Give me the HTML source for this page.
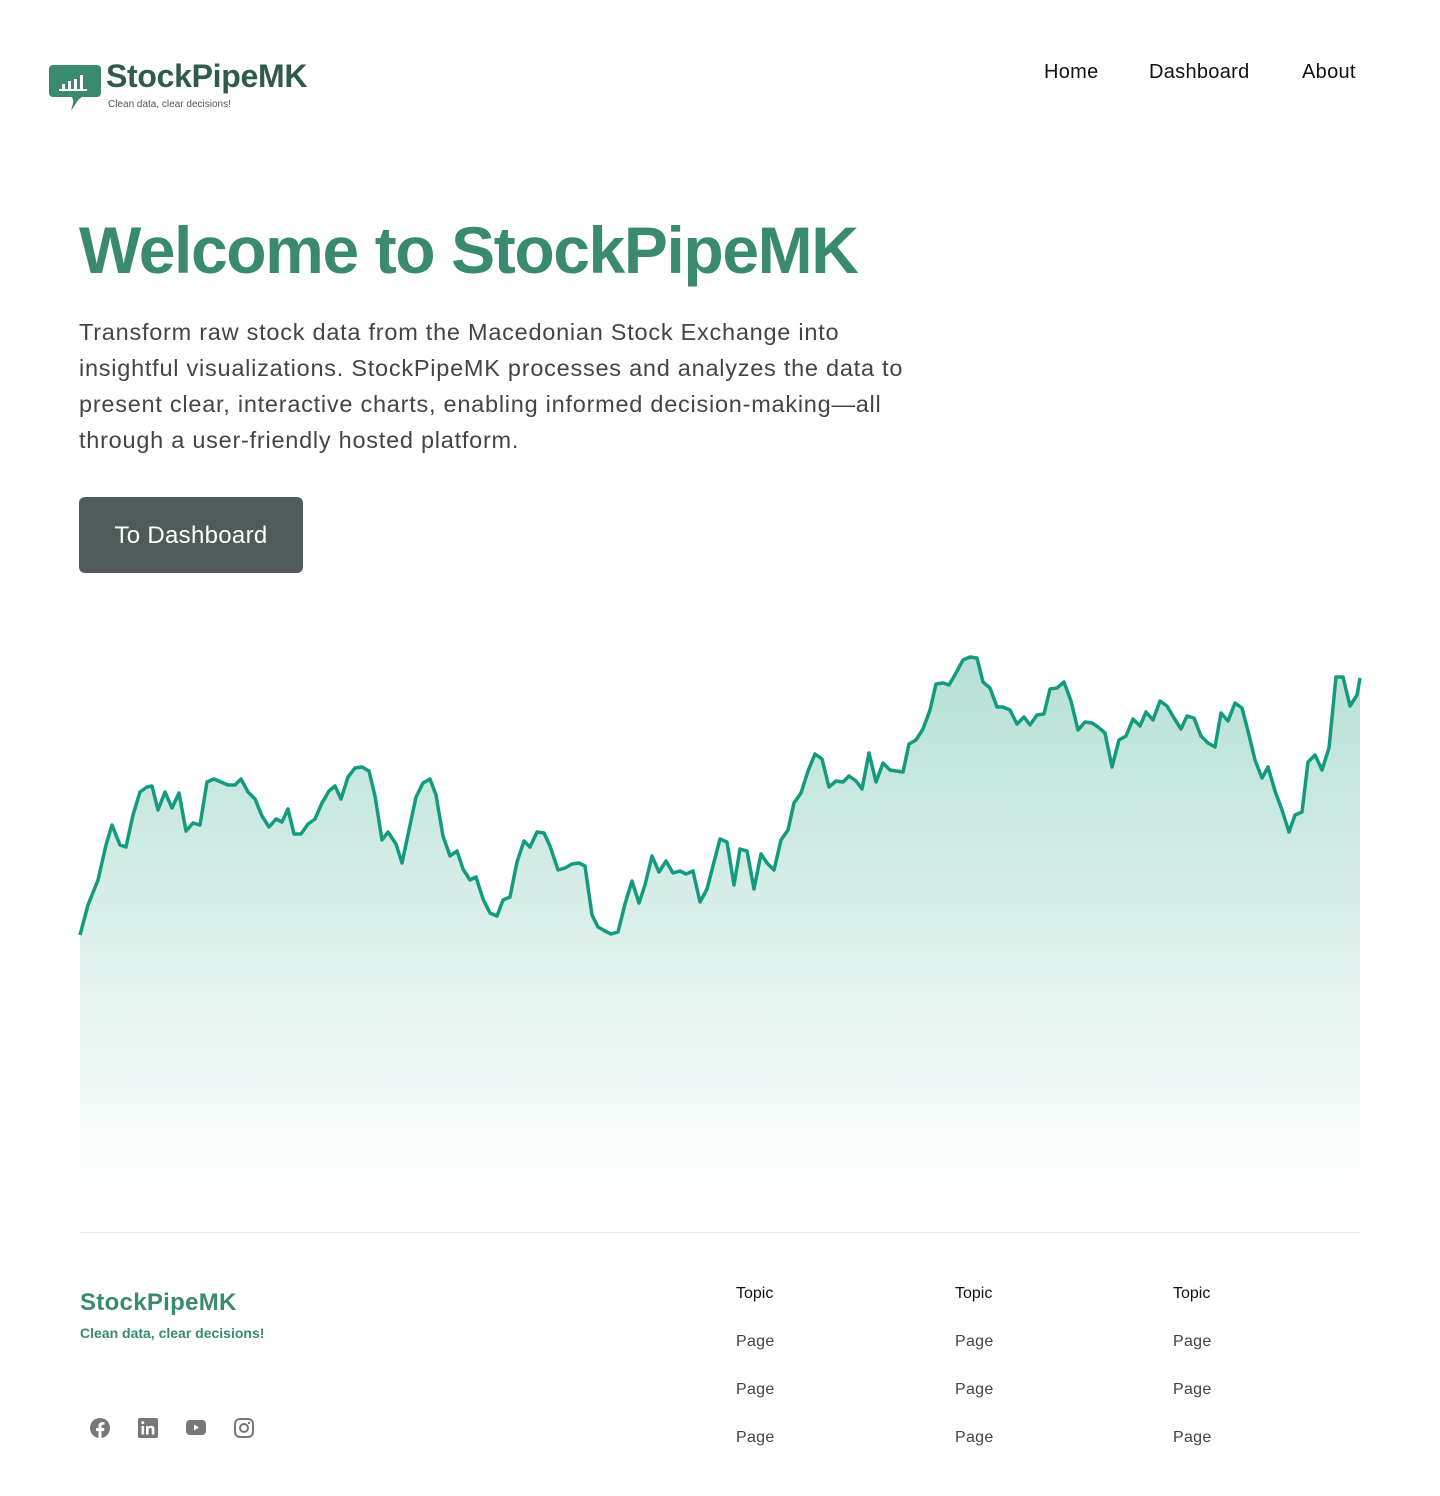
<!DOCTYPE html>
<html><head><meta charset="utf-8"><style>
*{margin:0;padding:0;box-sizing:border-box}
body{width:1440px;height:1496px;background:#fff;font-family:"Liberation Sans",sans-serif;position:relative;overflow:hidden}
.a{position:absolute}
nav a{position:absolute;top:61px;font-size:20px;color:#111;text-decoration:none;letter-spacing:0.3px}
.ft{font-size:16px;color:#111}
.fp{font-size:16px;color:#444;letter-spacing:0.3px}
</style></head><body>
<svg class="a" style="left:48px;top:62px" width="56" height="50" viewBox="0 0 56 50">
<path d="M5 3h44a4 4 0 0 1 4 4v24a4 4 0 0 1-4 4H34l-8 6-2-6H5a4 4 0 0 1-4-4V7a4 4 0 0 1 4-4z" fill="#3a8a70"/>
<path d="M26 37l-3 12 9-14z" fill="#3a8a70"/>
<g fill="#fff"><rect x="14" y="22" width="3" height="5"/><rect x="20" y="19" width="3" height="8"/><rect x="26" y="17" width="3" height="10"/><rect x="32" y="13" width="3" height="14"/><rect x="11" y="27" width="28" height="2"/></g>
</svg>
<div class="a" style="left:106px;top:58px;font-size:32px;font-weight:bold;color:#2f5a4c;letter-spacing:-0.3px">StockPipeMK</div>
<div class="a" style="left:108px;top:99px;font-size:10px;color:#555">Clean data, clear decisions!</div>
<nav><a style="left:1044px">Home</a><a style="left:1149px">Dashboard</a><a style="left:1302px">About</a></nav>
<div class="a" style="left:79px;top:212px;font-size:66px;font-weight:bold;color:#3a8a70;letter-spacing:-1.4px">Welcome to StockPipeMK</div>
<div class="a" style="left:79px;top:314px;width:850px;font-size:23.5px;line-height:36px;color:#444;letter-spacing:0.75px">Transform raw stock data from the Macedonian Stock Exchange into insightful visualizations. StockPipeMK processes and analyzes the data to present clear, interactive charts, enabling informed decision-making—all through a user-friendly hosted platform.</div>
<div class="a" style="left:79px;top:497px;width:224px;height:76px;background:#4f5b58;border-radius:6px;color:#fff;font-size:24px;line-height:78px;text-align:center;letter-spacing:0.3px">To Dashboard</div>
<svg class="a" style="left:0;top:0" width="1440" height="1496">
<defs><linearGradient id="g" x1="0" y1="650" x2="0" y2="1195" gradientUnits="userSpaceOnUse"><stop offset="0" stop-color="#b5e0d4"/><stop offset="1" stop-color="#fff"/></linearGradient></defs>
<path id="p" d="M80,935 L88,905 98,880 106,845 112,825 120,845 126,847 133,815 140,792 147,787 152,786 158,810 165,792 172,808 179,793 186,831 193,823 200,825 207,782 214,779 221,782 228,785 235,785 241,779 248,792 255,799 262,816 269,827 276,819 282,822 288,809 294,834 301,834 308,824 315,819 322,803 329,791 335,786 341,799 348,777 355,768 362,767 369,771 375,796 382,840 388,832 396,844 402,863 409,830 416,797 423,783 430,779 436,795 443,836 450,856 457,851 463,869 470,880 476,877 483,899 490,913 497,916 503,900 510,897 517,862 524,841 530,847 537,832 544,833 550,846 558,870 565,868 572,864 579,863 585,866 592,915 598,927 605,931 611,934 618,932 625,904 632,881 639,903 645,885 652,856 659,872 666,861 673,873 680,871 686,874 693,871 700,902 707,889 714,862 720,839 727,842 734,885 740,849 747,851 754,889 761,854 767,863 774,870 781,840 788,830 794,803 801,793 808,771 815,754 822,759 829,787 836,781 843,782 849,776 856,781 862,789 869,753 876,782 883,763 890,770 896,771 903,772 909,744 916,740 923,729 930,710 936,684 943,683 949,685 956,673 963,660 970,657 977,658 983,682 990,688 997,707 1003,707 1010,710 1017,724 1024,717 1030,725 1037,715 1044,714 1050,689 1057,688 1064,682 1071,701 1078,730 1085,722 1092,723 1098,727 1105,733 1112,767 1119,740 1126,736 1133,719 1140,726 1146,712 1153,720 1160,701 1167,706 1174,718 1181,729 1187,716 1194,718 1201,736 1208,743 1215,747 1221,713 1228,721 1235,703 1242,708 1249,735 1255,760 1262,778 1268,767 1275,791 1282,810 1289,832 1295,815 1302,812 1308,762 1315,755 1322,770 1329,748 1336,677 1343,677 1350,706 1357,695 1360,678" fill="none"/>
<path d="M80,935 L88,905 98,880 106,845 112,825 120,845 126,847 133,815 140,792 147,787 152,786 158,810 165,792 172,808 179,793 186,831 193,823 200,825 207,782 214,779 221,782 228,785 235,785 241,779 248,792 255,799 262,816 269,827 276,819 282,822 288,809 294,834 301,834 308,824 315,819 322,803 329,791 335,786 341,799 348,777 355,768 362,767 369,771 375,796 382,840 388,832 396,844 402,863 409,830 416,797 423,783 430,779 436,795 443,836 450,856 457,851 463,869 470,880 476,877 483,899 490,913 497,916 503,900 510,897 517,862 524,841 530,847 537,832 544,833 550,846 558,870 565,868 572,864 579,863 585,866 592,915 598,927 605,931 611,934 618,932 625,904 632,881 639,903 645,885 652,856 659,872 666,861 673,873 680,871 686,874 693,871 700,902 707,889 714,862 720,839 727,842 734,885 740,849 747,851 754,889 761,854 767,863 774,870 781,840 788,830 794,803 801,793 808,771 815,754 822,759 829,787 836,781 843,782 849,776 856,781 862,789 869,753 876,782 883,763 890,770 896,771 903,772 909,744 916,740 923,729 930,710 936,684 943,683 949,685 956,673 963,660 970,657 977,658 983,682 990,688 997,707 1003,707 1010,710 1017,724 1024,717 1030,725 1037,715 1044,714 1050,689 1057,688 1064,682 1071,701 1078,730 1085,722 1092,723 1098,727 1105,733 1112,767 1119,740 1126,736 1133,719 1140,726 1146,712 1153,720 1160,701 1167,706 1174,718 1181,729 1187,716 1194,718 1201,736 1208,743 1215,747 1221,713 1228,721 1235,703 1242,708 1249,735 1255,760 1262,778 1268,767 1275,791 1282,810 1289,832 1295,815 1302,812 1308,762 1315,755 1322,770 1329,748 1336,677 1343,677 1350,706 1357,695 1360,678 L1360,1195 L80,1195 Z" fill="url(#g)"/>
<use href="#p" stroke="#149a7e" stroke-width="3.5" stroke-linejoin="round"/>
<line x1="80" y1="1232.5" x2="1360" y2="1232.5" stroke="#e6e6e6"/>
<g fill="#777">
<circle cx="100" cy="1428" r="10"/><path d="M101.5 1438v-7h2.5l.4-3h-2.9v-1.8c0-.8.3-1.4 1.4-1.4h1.6v-2.6c-.3 0-1.2-.1-2.3-.1-2.3 0-3.7 1.4-3.700 3.9v2h-2.5v3h2.5v7z" fill="#fff"/>
<rect x="138" y="1418" width="20" height="20" rx="2"/><g fill="#fff"><rect x="141.5" y="1426" width="2.6" height="8.5"/><circle cx="142.8" cy="1422.6" r="1.5"/><path d="M146 1426h2.5v1.2c.5-.9 1.6-1.5 2.9-1.5 2.4 0 3 1.5 3 3.6v5.2h-2.6v-4.6c0-1.1-.2-2-1.4-2-1.2 0-1.800.8-1.8 2.1v4.5H146z"/></g>
<rect x="186" y="1420" width="20" height="15" rx="4"/><path d="M194 1424.5v6l5-3z" fill="#fff"/>
<rect x="235" y="1419" width="18" height="18" rx="5" fill="none" stroke="#777" stroke-width="2"/><circle cx="244" cy="1428" r="4" fill="none" stroke="#777" stroke-width="2"/><circle cx="249" cy="1423" r="1.2"/>
</g>
</svg>
<div class="a" style="left:80px;top:1289px;font-size:24px;font-weight:bold;color:#3a8a70;letter-spacing:0.3px">StockPipeMK</div>
<div class="a" style="left:80px;top:1325px;font-size:14px;font-weight:bold;color:#3a8a70">Clean data, clear decisions!</div>
<div class="a ft" style="left:736px;top:1285px">Topic</div>
<div class="a ft" style="left:955px;top:1285px">Topic</div>
<div class="a ft" style="left:1173px;top:1285px">Topic</div>
<div class="a fp" style="left:736px;top:1333px">Page</div><div class="a fp" style="left:955px;top:1333px">Page</div><div class="a fp" style="left:1173px;top:1333px">Page</div>
<div class="a fp" style="left:736px;top:1381px">Page</div><div class="a fp" style="left:955px;top:1381px">Page</div><div class="a fp" style="left:1173px;top:1381px">Page</div>
<div class="a fp" style="left:736px;top:1429px">Page</div><div class="a fp" style="left:955px;top:1429px">Page</div><div class="a fp" style="left:1173px;top:1429px">Page</div>
</body></html>
